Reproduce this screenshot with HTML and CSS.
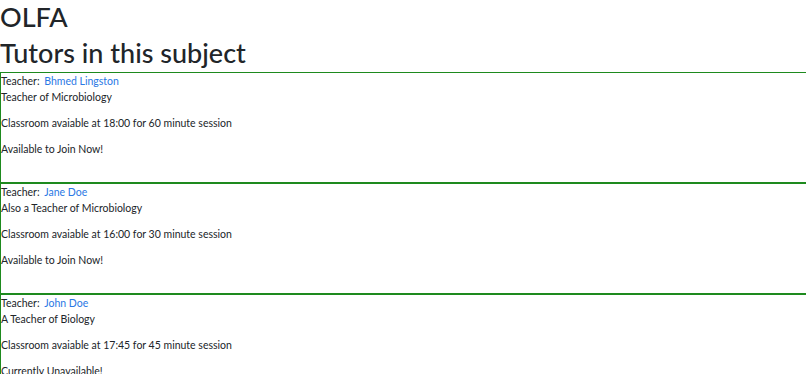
FILE: index.html
```html
<!DOCTYPE html>
<html lang="en">
<head>
    <meta charset="UTF-8">
    <meta name="viewport" content="width=device-width, initial-scale=1.0">
    <title>OLFA - Tutors</title>
    <link rel="stylesheet" href="styles.css">
</head>
<body>
    <h1>OLFA</h1>
    <h2>Tutors in this subject</h2>

    <div class="tutor">
        <div class="teacher">Teacher: <a href="#">Bhmed Lingston</a></div>
        <div>Teacher of Microbiology</div>
        <p>Classroom avaiable at 18:00 for 60 minute session</p>
        <p>Available to Join Now!</p>
    </div>

    <div class="tutor">
        <div class="teacher">Teacher: <a href="#">Jane Doe</a></div>
        <div>Also a Teacher of Microbiology</div>
        <p>Classroom avaiable at 16:00 for 30 minute session</p>
        <p>Available to Join Now!</p>
    </div>

    <div class="tutor">
        <div class="teacher">Teacher: <a href="#">John Doe</a></div>
        <div>A Teacher of Biology</div>
        <p>Classroom avaiable at 17:45 for 45 minute session</p>
        <p>Currently Unavailable!</p>
    </div>
</body>
</html>
```

FILE: styles.css
```css
body {
    font-family: Lato, "Noto Sans", sans-serif;
    font-size: 10.5px;
    line-height: 16px;
    color: #212529;
    margin: 0;
}
h1, h2 {
    font-size: 27px;
    font-weight: 500;
    line-height: 34px;
    margin: 0 0 2px 0;
}
.tutor {
    width: 100%;
    border: 1px solid #1e8a1e;
    padding-bottom: 25px;
}
.tutor p {
    margin: 10px 0 0 0;
}
.teacher a {
    color: #2a78e4;
    text-decoration: none;
    margin-left: 2px;
}
```
